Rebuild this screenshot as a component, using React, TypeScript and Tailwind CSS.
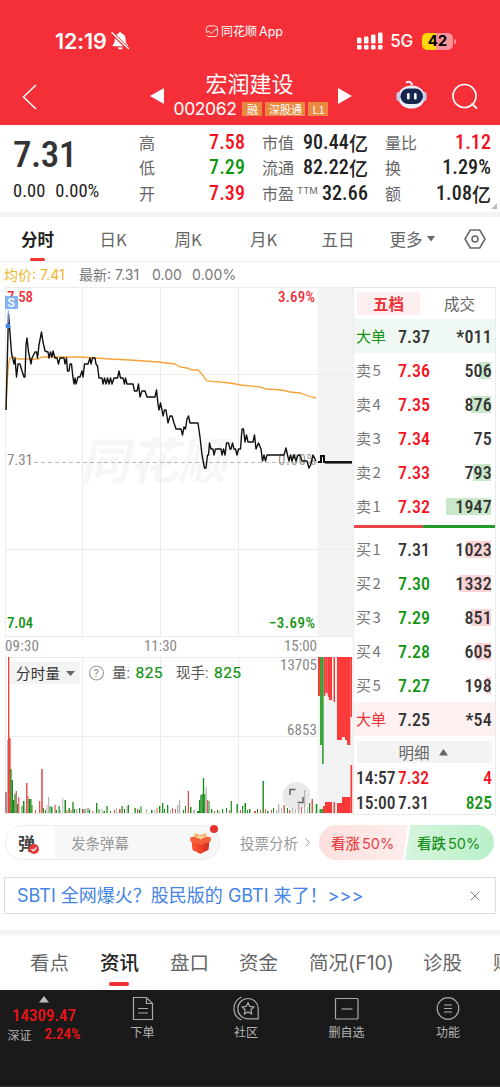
import { ChevronRight, X } from "lucide-react";

type QuoteRow = {
  label: string;
  price: string;
  volume: string;
  bar: string;
};

const sellRows: QuoteRow[] = [
  { label: "卖5", price: "7.36", volume: "506", bar: "w-[12px]" },
  { label: "卖4", price: "7.35", volume: "876", bar: "w-[20px]" },
  { label: "卖3", price: "7.34", volume: "75", bar: "w-0" },
  { label: "卖2", price: "7.33", volume: "793", bar: "w-[18px]" },
  { label: "卖1", price: "7.32", volume: "1947", bar: "w-[45px]" },
];

const buyRows: QuoteRow[] = [
  { label: "买1", price: "7.31", volume: "1023", bar: "w-[25px]" },
  { label: "买2", price: "7.30", volume: "1332", bar: "w-[32px]" },
  { label: "买3", price: "7.29", volume: "851", bar: "w-[20px]" },
  { label: "买4", price: "7.28", volume: "605", bar: "w-[15px]" },
  { label: "买5", price: "7.27", volume: "198", bar: "w-[5px]" },
];

const pricePath =
  "6,410 8.5,314 10,333 11.5,353 14,364 15,358 16.5,377 18,364 20,364 22,371 24,377 25,377 26,345 27,338 28.5,352 31,364 32,358 35,352 36.5,352 37.5,358 39,345 41.5,332 43,342 45,351 48,352 49,358 50.5,352 52,357 53,351 55,358 57,358 58.5,364 60,358 64,358 65,364 66.5,358 67.5,371 69,371 70,364 71.5,364 73,378 74,384 75,378 76,384 78,377 80,377 82,371 83,377 84.5,364 88,364 90,358 91,364 92.5,358 95,358 96,364 97.5,366 99,378 102,378 103,384 104.5,378 106,384 107.5,378 109,384 110.5,378 112,384 114,378 117.5,378 119,371 120.5,378 123,378 124.5,384 125.5,378 127,384 133,384 134.5,391 137,391 138.5,384 140,397 142,391 145,391 147,397 155,397 156.5,390 158,404 159,410 160.5,403 162,410 163,416 164.5,410 166,410 168,423 170,416 172,416 174,423 176,429 181,429 182.5,435 184,427 185.5,429 187,419 188.5,416 190,423 198,423 200,437 202,455 204.5,468 206,468 207.5,455 208.5,455 209.5,443 211,449 213,449 214,455 215.5,449 221,449 222,455 223.5,449 225,455 226.5,443 228.5,443 230,449 231,449 232.5,443 234,449 235.5,449 237,455 238.5,449 240.5,449 242,429 243.5,429 245,442 246.5,435 248,442 253,442 254.5,435 256,449 258.5,443 261,449 262.5,461 264,455 265.5,461 267,455 284,455 286,448 287.5,455 289,461 290.5,455 292,461 294,455 296,461 298,455 300,455 302,461 307,461 309,468 311,464 313,455 315,459 316,461";

const averagePath =
  "6,410 7,385 8.5,365 10,358 14,357 18,359 32,359 38,359 42,357 80,357 110,359 130,360 158,362 175,364 180,367 187,368 192,370 198,370 201,373 207,381 230,383 241,385 260,387 266,389 282,390 290,392 300,393 306,395 312,397 316,398";

const RED = "#e0524f";
const GREEN = "#198c19";
const GRAY = "#b5b5b5";

// x, top, width, color
const volumeBars: [number, number, number, string][] = [
  [5, 792, 2, "#c48080"], [7, 740, 1, GRAY], [8, 657, 1.4, "#e94545"], [9.2, 738, 1.4, "#f03028"],
  [10.3, 769, 1.3, GREEN], [11.5, 780, 1.5, GREEN], [13, 800, 1.2, GREEN], [14.3, 794, 1.2, GREEN],
  [15.6, 791, 1.2, "#a55"], [17, 804, 1.2, GREEN], [18.2, 797, 1.2, RED], [21.5, 806, 1, GREEN],
  [23, 801, 1.5, GREEN], [24.6, 809, 1, GRAY], [26, 783, 1.5, RED], [27.5, 796, 1, RED],
  [28.5, 799, 1.5, GREEN], [30.2, 799, 1.3, GREEN], [31.5, 805, 1, GREEN], [35, 810, 1, RED],
  [39, 801, 1.3, RED], [41.2, 769, 1.6, RED], [43, 808, 1, GREEN], [45, 810, 1, GREEN],
  [46.5, 805, 1, GRAY], [48, 797, 1.2, GRAY], [49.5, 806, 1, GREEN], [51, 807, 1.5, GREEN],
  [54.5, 805, 1.2, RED], [56, 810, 1, GREEN], [58.5, 806, 1.2, GREEN], [60, 810, 1, GRAY],
  [62.3, 798, 1, GRAY], [64.5, 800, 1.5, GREEN], [66.5, 810, 1, RED], [68.5, 808, 1.3, GREEN],
  [70.5, 810, 1, RED], [72.3, 802, 1.3, GREEN], [74, 809, 1, GREEN], [76, 809, 1.5, GRAY],
  [79, 808, 1.2, GREEN], [82, 809, 1.5, "#a33"], [84.5, 809, 1, GREEN], [86.5, 808, 3, GRAY],
  [89, 810, 1.2, GREEN], [92.5, 811, 1, RED], [96, 803, 1.3, GREEN], [98.5, 809, 1, GREEN],
  [101.5, 809, 1, GRAY], [103.5, 811, 1.5, GREEN], [106.3, 806, 1.3, GREEN], [110, 811, 1, GREEN],
  [114, 810, 1, RED], [116, 808, 1, GRAY], [119, 809, 1.6, RED], [121.5, 806, 1.3, GREEN],
  [124, 809, 1, GREEN], [126.5, 806, 1, GRAY], [127.7, 805, 1.3, GREEN], [134.5, 808, 1.3, GREEN],
  [137, 809, 1.3, RED], [139, 810, 1, GREEN], [140.5, 806, 1, GREEN], [146, 809, 1, GRAY],
  [151, 810, 1.5, GREEN], [154, 810, 1, GRAY], [156.5, 808, 1, RED], [159, 806, 1.3, GREEN],
  [162, 803, 1.3, GREEN], [164, 809, 1, GREEN], [167, 805, 1.3, GREEN], [170, 810, 1, GRAY],
  [172, 808, 1, RED], [175, 809, 1, RED], [177, 805, 1.5, GRAY], [179, 800, 1.3, GRAY],
  [183, 810, 1, GREEN], [185, 806, 1, GREEN], [187.7, 791, 1.3, RED], [190, 807, 1.5, GREEN],
  [193, 810, 2, GRAY], [197, 811, 2, GREEN], [199, 800, 1.3, GREEN], [200.3, 795, 1.3, GREEN],
  [201.6, 794, 1.2, GREEN], [202.8, 778, 1.4, GREEN], [204.2, 794, 1.2, GREEN], [205.6, 787, 1.2, GRAY],
  [207, 800, 1.2, RED], [208.5, 801, 1, GREEN], [211, 809, 1.3, GREEN], [214, 811, 1, RED],
  [217, 810, 1.2, GREEN], [219, 811, 1, GRAY], [222, 809, 1.2, GREEN], [226, 808, 1, GREEN],
  [229, 810, 1, RED], [230.7, 801, 1.2, GREEN], [236.5, 804, 1.4, GREEN], [240, 810, 1, RED],
  [242, 806, 1.2, GREEN], [244.5, 803, 1.5, GREEN], [247, 810, 1, GREEN], [249, 809, 1.4, GREEN],
  [254, 811, 2, RED], [257, 809, 1, GREEN], [260, 810, 1, RED], [262.5, 781, 1.4, GREEN],
  [265, 809, 1, RED], [267, 811, 1.5, GREEN], [271, 810, 1, RED], [273, 808, 1, GREEN],
  [276, 810, 1.2, GRAY], [278, 804, 1.4, GRAY], [281, 808, 1, GRAY], [283.5, 805, 1.4, RED],
  [287, 808, 1, GREEN], [289, 810, 1.4, RED], [292, 808, 1.2, GRAY], [295, 809, 1, GRAY],
  [298, 804, 1.4, GRAY], [301, 807, 1, RED], [304, 790, 1.2, GRAY], [307, 807, 1.2, GRAY],
  [309, 803, 1.2, GREEN], [311.5, 799, 1.5, RED], [315.7, 804, 1.6, GREEN],
  [319.5, 809, 3.5, "#37a237"], [323, 806, 2, "#f93838"], [325, 802, 7, "#f93838"],
  [333.5, 802, 1.5, "#f93838"], [337, 803, 5, "#f93838"], [342, 797, 8.5, "#f93838"],
  [350.5, 765, 1.7, "#f93838"],
];

// x, bottom, width, color of the bars hanging from the top in the after-hours strip
const auctionBars: [number, number, number, string][] = [
  [318, 696, 2, "#fb3a3a"], [320, 745, 2.2, "#3aa33a"], [322, 764, 1.7, "#3aa33a"],
  [323.7, 696, 1.6, "#fb3a3a"], [325.3, 693, 2.4, "#fb3a3a"], [327.7, 697, 1.3, "#fb3a3a"],
  [329, 700, 3, "#fb3a3a"], [333.5, 702, 1.5, "#fb3a3a"], [337, 740, 5, "#fb3a3a"],
  [342, 737, 3, "#fb3a3a"], [345, 740, 2, "#fb3a3a"], [347, 745, 3.3, "#fb3a3a"],
  [350.3, 717, 1.7, "#fb3a3a"],
];

const periods = [
  { name: "日K", width: "w-[76px]" },
  { name: "周K", width: "w-[74px]" },
  { name: "月K", width: "w-[77px]" },
  { name: "五日", width: "w-[72px]" },
];

function Header() {
  return (
    <header className="h-[125px] bg-[#f42f38] text-white">
      <div className="flex h-[62px] items-start pl-[55px] pr-[44px]">
        <div className="mt-[30px] flex w-[150px] items-center gap-1">
          <span className="font-[Inter] text-[21.5px] font-semibold leading-[22px] tracking-[-0.1px]">12:19</span>
          <svg width="19" height="20" viewBox="0 0 19 20" fill="white">
            <path d="M9.2 1.2c-.9 0-1.5.6-1.6 1.4C4.700 3.500 3.800 5.700 3.800 8.400c0 3-.8 4.200-2 5.300-.6.600-.3 1.500.6 1.500h13.700c.9 0 1.200-.9.500-1.500-1.200-1.100-2-2.300-2-5.300 0-2.700-1-4.900-3.800-5.800-.1-.8-.7-1.400-1.600-1.400zM6.800 16.500c.3 1.200 1.300 2 2.500 2s2.200-.8 2.500-2z" />
            <path d="M1.500 2.500 17.500 18" stroke="#f42f38" strokeWidth="3.2" />
            <path d="M1 1.800 17.500 17.500" stroke="white" strokeWidth="1.4" strokeLinecap="round" />
          </svg>
        </div>
        <div className="mr-auto mt-[22px] flex items-center gap-[2px] font-[Inter,'Noto_Sans_CJK_SC',sans-serif] text-[12px] leading-[19px]">
          <svg width="14" height="15" viewBox="0 0 15 15" fill="none" stroke="white" strokeWidth="0.9">
            <path d="M1.400 8V4.500a3 3 0 0 1 3-3h6a3 3 0 0 1 3 3V10a3 3 0 0 1-3 3h-6a3 3 0 0 1-2.600-1.600" />
            <path d="m1 8.500 3.500-1L7 9.600l3.500-3.800 2.700-.6" />
          </svg>
          <span className="whitespace-nowrap">同花顺<span className="ml-[2px] text-[12.500px]">App</span></span>
        </div>
        <div className="mt-[31px] flex w-[150px] items-center justify-end">
          <svg width="26" height="18" viewBox="0 0 26 18" fill="white">
            <rect x="0" y="5.500" width="4.500" height="6" rx="1.300" />
            <rect x="7" y="4.500" width="4.500" height="7" rx="1.300" />
            <rect x="14" y="2.500" width="4.500" height="9" rx="1.300" />
            <rect x="21" y="0.500" width="4.500" height="11" rx="1.300" />
            <rect x="0" y="13" width="4.500" height="4.500" rx="1.300" />
            <rect x="7" y="13" width="4.500" height="4.500" rx="1.300" />
            <rect x="14" y="13" width="4.500" height="4.500" rx="1.300" />
            <rect x="21" y="13" width="4.500" height="4.500" rx="1.300" />
          </svg>
          <span className="ml-[7px] font-[Inter] text-[17px] font-medium leading-5 tracking-[-0.200px]">5G</span>
          <span className="ml-[9px] flex h-[17px] w-[31px] items-center justify-center rounded-[5px] bg-linear-to-r from-[#ffd60a] from-45% to-[#fb9297] to-45% font-[Inter] text-[15px] font-bold text-black">42</span>
          <span className="ml-px h-[5px] w-[2px] rounded-r bg-[#fb9297]" />
        </div>
      </div>

      <div className="flex h-[63px] items-center pl-[21px]">
        <svg className="mt-[6px]" width="17" height="26" viewBox="0 0 17 26" fill="none" stroke="white" strokeWidth="1.500">
          <path d="M15 1 2.500 13 15 25" />
        </svg>
        <svg className="ml-[112px] mt-[5px]" width="14" height="16" viewBox="0 0 14 16" fill="white">
          <path d="M14 0v16L0 8z" />
        </svg>
        <div className="ml-[9px] flex w-[156px] flex-col items-center pt-[2px]">
          <div className="pr-[3px] text-[22px] font-normal leading-[29px]">宏润建设</div>
          <div className="flex h-[25px] items-center gap-[3px] whitespace-nowrap">
            <span className="mr-[3px] font-[Inter] text-[17.5px] leading-6 tracking-[-0.400px]">002062</span>
            <span className="flex h-[14px] w-5 items-center justify-center bg-[#e9883f] text-[11px]">融</span>
            <span className="flex h-[14px] w-10 items-center justify-center bg-[#e9883f] text-[11px]">深股通</span>
            <span className="flex h-[14px] w-5 items-center justify-center bg-[#e9883f] text-[11px]">L1</span>
          </div>
        </div>
        <svg className="ml-[9px] mt-[5px]" width="15" height="16" viewBox="0 0 15 16" fill="white">
          <path d="M0 0v16l14-8z" />
        </svg>
        <svg className="ml-[43px] mt-[3px]" width="32" height="30" viewBox="0 0 32 30">
          <path d="M10 2.500c3-1.500 6-.5 6 3" fill="none" stroke="#f4f3fb" strokeWidth="2" />
          <ellipse cx="15.500" cy="17" rx="13.500" ry="11.500" fill="#edf0fc" />
          <rect x="0.500" y="12" width="4" height="9" rx="2" fill="#c6cbe8" />
          <rect x="26.500" y="12" width="4" height="9" rx="2" fill="#c6cbe8" />
          <rect x="4.500" y="8.500" width="22.500" height="15.500" rx="7.750" fill="#17264d" />
          <rect x="11" y="13" width="2.600" height="6.500" rx="1.300" fill="white" />
          <rect x="18" y="13" width="2.600" height="6.500" rx="1.300" fill="white" />
        </svg>
        <svg className="ml-[23px] mt-[6px]" width="28" height="28" viewBox="0 0 28 28" fill="none" stroke="white" strokeWidth="1.700">
          <circle cx="13.500" cy="13" r="11.500" />
          <path d="m21 21 4.500 4" strokeLinecap="round" />
        </svg>
      </div>
    </header>
  );
}

function Amount({ value, unit, color = "text-[#222]" }: { value: string; unit?: string; color?: string }) {
  return (
    <span className={`flex font-medium ${color}`}>
      <span className="font-[Roboto] text-[20px] tracking-[0.100px] font-stretch-[85%]">{value}</span>
      {unit && <span className="text-[19px]">{unit}</span>}
    </span>
  );
}

function Summary() {
  return (
    <section className="flex h-[87px] bg-white pt-[5px] text-[16px] text-[#222]">
      <div className="w-[139px] pl-[13px] font-[Roboto]">
        <div className="mt-[4px] text-[37px] font-medium leading-[41px] tracking-[-0.500px] text-[#333] font-stretch-[85%]">7.31</div>
        <div className="mt-[6px] flex gap-[10px] text-[18.500px] leading-[20px] font-stretch-[85%]">
          <span>0.00</span>
          <span>0.00%</span>
        </div>
      </div>
      <div className="w-[106px] leading-[25.3px]">
        <div className="flex justify-between"><span className="text-[#666]">高</span><Amount value="7.58" color="text-[#f60d20]" /></div>
        <div className="flex justify-between"><span className="text-[#666]">低</span><Amount value="7.29" color="text-[#0f960f]" /></div>
        <div className="flex justify-between"><span className="text-[#666]">开</span><Amount value="7.39" color="text-[#f60d20]" /></div>
      </div>
      <div className="ml-[17px] w-[106px] whitespace-nowrap leading-[25.3px]">
        <div className="flex justify-between"><span className="text-[#666]">市值</span><Amount value="90.44" unit="亿" /></div>
        <div className="flex justify-between"><span className="text-[#666]">流通</span><Amount value="82.22" unit="亿" /></div>
        <div className="flex justify-between">
          <span className="flex text-[#666]">市盈<sup className="top-0 ml-[3px] font-[Inter] text-[9.500px] leading-[19px]">TTM</sup></span>
          <Amount value="32.66" />
        </div>
      </div>
      <div className="ml-[17px] w-[106px] leading-[25.3px]">
        <div className="flex justify-between"><span className="text-[#666]">量比</span><Amount value="1.12" color="text-[#f60d20]" /></div>
        <div className="flex justify-between"><span className="text-[#666]">换</span><Amount value="1.29%" /></div>
        <div className="flex justify-between"><span className="text-[#666]">额</span><Amount value="1.08" unit="亿" /></div>
      </div>
      <svg className="mt-[73px]" width="7" height="7" viewBox="0 0 7 7" fill="#bbb"><path d="M6 0v6H0z" /></svg>
    </section>
  );
}

function PeriodTabs() {
  return (
    <nav className="flex h-[45px] border-b border-[#f0f0f0] bg-white text-[16.5px] leading-[45px] text-[#666]">
      <div className="flex w-[75px] flex-col items-center">
        <span className="h-[41px] font-bold text-[#222]">分时</span>
        <span className="h-[3px] w-[15px] shrink-0 rounded-full bg-[#f2322f]" />
      </div>
      {periods.map((period) => (
        <div key={period.name} className={`${period.width} text-center`}>{period.name}</div>
      ))}
      <div className="flex w-[76px] items-center justify-center gap-1">
        更多
        <svg width="8" height="6" viewBox="0 0 8 6" fill="#666"><path d="M0 0h8L4 5.500z" /></svg>
      </div>
      <svg className="ml-[14px] mt-[11px]" width="22" height="22" viewBox="0 0 22 22" fill="none" stroke="#666" strokeWidth="1.500">
        <path d="M6.300 2h9.400L21 11l-5.300 9H6.300L1 11z" strokeLinejoin="round" />
        <circle cx="11" cy="11" r="3" />
      </svg>
    </nav>
  );
}

function PriceChart() {
  return (
    <svg className="block shrink-0 font-[Roboto,'Noto_Sans_CJK_SC',sans-serif]" width="353" height="528" viewBox="0 287 353 528">
      <text x="80" y="479" fontSize="49" fontWeight="700" fontStyle="italic" fill="#f6f6f6">同花顺</text>
      <rect x="317.500" y="287" width="35.500" height="349" fill="#f3f3f3" />
      <rect x="317.500" y="657" width="35.500" height="156" fill="#f3f3f3" />
      <g stroke="#ebebeb" strokeWidth="1" fill="none">
        <path d="M5 287.500h348M5 374.500h348M5 549.500h348M5 636.500h348M5 657.500h313M5 736.500h313M5 813.500h348" />
        <path d="M5.500 287v349M82.500 287v349M160.500 287v349M238.500 287v349M5.500 657v156M82.500 657v156M160.500 657v156M238.500 657v156" />
      </g>
      <path d="M34 462.500H318" stroke="#c9b9a4" strokeWidth="1" strokeDasharray="4 3" />
      <g className="font-stretch-[85%]" fontSize="15">
        <text x="7" y="302" fill="#ef3038" textLength="26" fontWeight="500">7.58</text>
        <text x="278" y="302" fill="#ef3038" textLength="37" fontWeight="500">3.69%</text>
        <text x="7" y="465" fill="#888" textLength="26">7.31</text>
        <text x="278" y="465" fill="#999" textLength="38">0.00%</text>
        <text x="7" y="628" fill="#129412" textLength="26" fontWeight="500">7.04</text>
        <text x="269" y="628" fill="#129412" textLength="46" fontWeight="500">−3.69%</text>
        <text x="5" y="651" fill="#888" textLength="34">09:30</text>
        <text x="144" y="651" fill="#888" textLength="33">11:30</text>
        <text x="284" y="651" fill="#888" textLength="33">15:00</text>
        <text x="280" y="669.500" fill="#888" textLength="37">13705</text>
        <text x="287" y="735" fill="#888" textLength="30">6853</text>
      </g>
      <polyline points={averagePath} fill="none" stroke="#f5a336" strokeWidth="1.300" />
      <polyline points={pricePath} fill="none" stroke="#111" strokeWidth="1.400" strokeLinejoin="round" />
      <path d="M318 462h3v-6h3v6h2" fill="none" stroke="#111" strokeWidth="2" />
      <path d="M325 462.300h27" stroke="#111" strokeWidth="2.600" />
      <path d="M8.300 310v13" stroke="#6fa8ee" strokeWidth="1" />
      <circle cx="8" cy="326" r="2.500" fill="#4688e8" />
      <rect x="5" y="296" width="13" height="13" fill="#6fa8ee" fillOpacity="0.850" />
      <text x="7.500" y="307" fontSize="12" fill="white" fontWeight="500">S</text>

      {auctionBars.map(([x, bottom, width, color]) => (
        <rect key={x} x={x} y={657} width={width} height={bottom - 657} fill={color} />
      ))}
      <circle cx="296.500" cy="796" r="14" fill="#e9e9e9" />
      {volumeBars.map(([x, top, width, color]) => (
        <rect key={x} x={x} y={top} width={width} height={813 - top} fill={color} />
      ))}
      <path d="M290 795v-5.500h5.500M297.500 802.500h5.500V797" fill="none" stroke="#666" strokeWidth="1.600" />

      <rect x="10.500" y="662" width="69" height="22" fill="#f3f3f3" />
      <text x="16" y="678.500" fontSize="14.500" fill="#333" textLength="44">分时量</text>
      <path d="M66 671h9l-4.500 5z" fill="#666" />
      <circle cx="96.500" cy="673" r="7" fill="none" stroke="#999" strokeWidth="1.100" />
      <text x="93.500" y="677" fontSize="11" fill="#888">?</text>
      <g fontSize="14.500">
        <text x="112" y="678" fill="#555">量:</text>
        <text x="135.500" y="678" fontSize="15.500" fill="#129412" stroke="#129412" strokeWidth="0.200" textLength="27">825</text>
        <text x="176" y="678" fill="#555">现手:</text>
        <text x="214" y="678" fontSize="15.500" fill="#129412" stroke="#129412" strokeWidth="0.200" textLength="27">825</text>
      </g>
    </svg>
  );
}

function OrderRow({ row, side }: { row: QuoteRow; side: "sell" | "buy" }) {
  const priceColor = side === "sell" ? "text-[#f8101c]" : "text-[#0f960f]";
  return (
    <div className="flex h-[34.100px] items-center pl-[2px] pr-[3px]">
      <span className="w-[42px] text-[15px] tracking-[1.500px] text-[#777]">{row.label}</span>
      <span className={`font-[Roboto] text-[18px] font-medium font-stretch-[85%] ${row.price === "7.31" ? "text-[#333]" : priceColor}`}>{row.price}</span>
      <span className="relative ml-auto flex h-[17px] items-center font-[Roboto] text-[18px] font-medium tracking-[0.200px] text-[#333] font-stretch-[85%]">
        <span className={`absolute right-px top-0 h-[17px] ${row.bar} ${side === "sell" ? "bg-[#c9e8ca]" : "bg-[#fbd3d5]"}`} />
        <span className="relative">{row.volume}</span>
      </span>
    </div>
  );
}

function OrderBook() {
  return (
    <div className="w-[143px] border border-[#ececec] border-t-[#e4e4e4] bg-white">
      <div className="flex h-[31px] items-center text-[15.500px]">
        <span className="ml-[3px] flex h-[23px] w-[63px] items-center justify-center bg-[#fdeff0] font-bold text-[#ee3035]">五档</span>
        <span className="ml-[24px] text-[#666]">成交</span>
      </div>
      <div className="flex h-[34px] items-center bg-[#f0f8f4] pl-[2px] pr-[3px]">
        <span className="w-[42px] text-[15px] text-[#129412]">大单</span>
        <span className="font-[Roboto] text-[18px] font-medium text-[#333] font-stretch-[85%]">7.37</span>
        <span className="ml-auto font-[Roboto] text-[18px] font-medium tracking-[0.200px] text-[#333] font-stretch-[85%]">*011</span>
      </div>
      {sellRows.map((row) => <OrderRow key={row.label} row={row} side="sell" />)}
      <div className="mb-[4px] mt-[2px] flex h-[2.500px]">
        <span className="w-[69px] bg-[#ea4448]" />
        <span className="flex-1 bg-[#239b2b]" />
      </div>
      {buyRows.map((row) => <OrderRow key={row.label} row={row} side="buy" />)}
      <div className="flex h-[34px] items-center bg-[#fdf1f2] pl-[2px] pr-[3px]">
        <span className="w-[42px] text-[15px] text-[#ee3035]">大单</span>
        <span className="font-[Roboto] text-[18px] font-medium text-[#333] font-stretch-[85%]">7.25</span>
        <span className="ml-auto font-[Roboto] text-[18px] font-medium tracking-[0.200px] text-[#333] font-stretch-[85%]">*54</span>
      </div>
      <div className="mx-[3px] mt-[5px] flex h-[22px] items-center justify-center gap-[9px] bg-[#f3f3f3] pr-[3px] text-[15.500px] text-[#666]">
        明细
        <svg width="9" height="7" viewBox="0 0 9 7" fill="#666"><path d="M0 6.500h9L4.500 0z" /></svg>
      </div>
      <div className="mt-[3px] pl-[2px] pr-[3px] font-[Roboto] text-[17.500px] font-medium leading-[25px] text-[#333] font-stretch-[85%]">
        <div className="flex"><span className="w-[42px] whitespace-nowrap">14:57</span><span className="text-[#f8101c]">7.32</span><span className="ml-auto text-[#f8101c]">4</span></div>
        <div className="flex"><span className="w-[42px] whitespace-nowrap">15:00</span><span>7.31</span><span className="ml-auto text-[#129412]">825</span></div>
      </div>
    </div>
  );
}

function CommentBar() {
  return (
    <section className="flex h-[62px] items-start bg-white pl-[5px] pt-[10px]">
      <div className="relative flex h-[35px] w-[215px] items-center overflow-visible rounded-full border border-[#ececec] bg-[#f7f7f7] text-[14.500px] text-[#999]">
        <div className="flex h-full w-[49px] items-center rounded-l-full bg-white pl-[12px]">
          <span className="text-[17px] font-bold text-[#444]">弹</span>
          <svg className="-ml-[6px] mt-[12px] shrink-0" width="10" height="10" viewBox="0 0 10 10">
            <circle cx="5" cy="5" r="5" fill="#e4393c" />
            <path d="m2.500 5 2 1.800 3-3.300" fill="none" stroke="white" strokeWidth="1.200" />
          </svg>
        </div>
        <span className="ml-[16px]">发条弹幕</span>
        <svg className="ml-[61px]" width="21" height="22" viewBox="0 0 21 22">
          <path d="M1.500 8.500 10.500 12v9.500l-8-3.500z" fill="#f4512e" />
          <path d="M19.500 8.500 10.500 12v9.500l8-3.500z" fill="#d93522" />
          <path d="M0 5.500 10 3l11 2.500-.5 4-10 3.500L.500 9.500z" fill="#f4603a" />
          <path d="M7.500 11.500 10.500 13l3-1.500v9l-3 1.300-3-1.300z" fill="#ee4128" />
          <path d="M10.500 6C8 5.500 4 4.500 4.500 2.500 5 .5 9 1.500 10.500 6c1.500-4.500 5.500-5.500 6-3.500.5 2-3.500 3-6 3.500z" fill="#f58a4a" stroke="#fbdc9a" strokeWidth="1.400" />
        </svg>
        <span className="absolute right-[1px] top-[-1px] h-[8px] w-[8px] rounded-full bg-[#e4302f]" />
      </div>
      <div className="ml-[20px] flex h-[35px] items-center gap-[2px] text-[14.500px] text-[#999]">
        投票分析
        <ChevronRight size={15} strokeWidth={1.500} />
      </div>
      <div className="ml-[4px] flex h-[35px] text-[14.500px] font-medium leading-[35px]">
        <div className="w-[89px] rounded-l-full bg-linear-to-r from-[#fddfdd] to-[#fdeeed] pl-[12px] text-[#e84248] [clip-path:polygon(0_0,100%_0,94%_100%,0_100%)]">看涨<span className="ml-[2px] font-[Inter] font-normal">50%</span></div>
        <div className="-ml-[3px] w-[89px] rounded-r-full bg-linear-to-r from-[#d6f5de] to-[#b9f0c8] pl-[12px] text-[#17901d] [clip-path:polygon(6%_0,100%_0,100%_100%,0_100%)]">看跌<span className="ml-[2px] font-[Inter] font-normal">50%</span></div>
      </div>
    </section>
  );
}

function InfoTabs() {
  return (
    <nav className="flex h-[55px] shrink-0 overflow-hidden whitespace-nowrap bg-white pl-[30px] text-[19.500px] leading-[54px] text-[#666]">
      <span className="w-[70px] shrink-0">看点</span>
      <span className="flex w-[70px] shrink-0 flex-col">
        <span className="h-[47px] font-medium text-[#222]">资讯</span>
        <span className="ml-[9px] h-[4px] w-[20px] rounded-full bg-[#ee3035]" />
      </span>
      <span className="w-[69px] shrink-0">盘口</span>
      <span className="w-[70px] shrink-0">资金</span>
      <span className="w-[114px] shrink-0">简况<span className="font-[Inter]">(F10)</span></span>
      <span className="w-[70px] shrink-0">诊股</span>
      <span className="shrink-0">财务</span>
    </nav>
  );
}

function BottomBar() {
  return (
    <footer className="flex h-[97px] shrink-0 border-b border-[#333] bg-[#1a1a1a] text-[12px] text-[#b5b5b5]">
      <div className="flex w-[88px] flex-col items-center pt-[6px]">
        <svg width="10" height="7" viewBox="0 0 10 7" fill="#bbb"><path d="M0 6.500h10L5 0z" /></svg>
        <span className="mt-[1px] font-[Roboto] text-[17px] font-medium leading-[22px] text-[#ef1218] font-stretch-[85%]">14309.47</span>
        <span className="flex items-center gap-[13px] whitespace-nowrap leading-[17px]">
          <span className="text-[12px]">深证</span>
          <span className="font-[Roboto] text-[15px] font-medium text-[#ef1218] font-stretch-[85%]">2.24%</span>
        </span>
      </div>
      <div className="flex w-[109px] flex-col items-center gap-[2px] pt-[6px]">
        <svg width="24" height="25" viewBox="0 0 24 25" fill="none" stroke="#aaa" strokeWidth="1.200">
          <path d="M2.500 1.500h13l6 6V23.500h-19zM15.500 1.500v6h6M7 12.500h10M7 17h10" />
        </svg>
        <span>下单</span>
      </div>
      <div className="flex w-[98px] flex-col items-center gap-[2px] pt-[6px]">
        <svg width="26" height="25" viewBox="0 0 26 25" fill="none" stroke="#aaa" strokeWidth="1.200">
          <path d="M15 2.500a10.200 10.200 0 1 0 0 20.400h10.200V12.500A10.200 10.200 0 0 0 15 2.500z" />
          <path d="M8.500 1C3.500 3.500 1 7.500 1 12.500s2.500 9.500 7.500 11.500" />
          <path d="m15 6.800 1.800 3.600 4 .6-2.900 2.800.7 4-3.600-1.900-3.600 1.900.7-4L9.200 11l4-.6z" />
        </svg>
        <span>社区</span>
      </div>
      <div className="flex w-[103px] flex-col items-center gap-[2px] pt-[6px]">
        <svg width="25" height="25" viewBox="0 0 25 25" fill="none" stroke="#aaa" strokeWidth="1.200">
          <rect x="1.500" y="2.500" width="22.500" height="20.500" rx="1" />
          <path d="M7.500 13h11" />
        </svg>
        <span>删自选</span>
      </div>
      <div className="flex w-[100px] flex-col items-center gap-[2px] pt-[6px]">
        <svg width="24" height="25" viewBox="0 0 24 25" fill="none" stroke="#aaa" strokeWidth="1.200">
          <circle cx="12" cy="12.500" r="10.800" />
          <path d="M8 9h8M8 12.500h8M8 16h8" />
        </svg>
        <span>功能</span>
      </div>
    </footer>
  );
}

export default function App() {
  return (
    <div className="flex h-[1087px] w-[500px] flex-col overflow-hidden bg-white font-['Noto_Sans_CJK_SC',sans-serif]">
      <Header />
      <Summary />
      <div className="h-[5px] shrink-0 bg-[#f4f4f4]" />
      <PeriodTabs />
      <div className="flex h-[25px] items-center whitespace-nowrap pl-[4px] font-[Inter,'Noto_Sans_CJK_SC',sans-serif] text-[14px] text-[#777]">
        <span className="w-[75px] text-[#efb52d]">均价: 7.41</span>
        <span className="w-[73px]">最新: 7.31</span>
        <span className="w-[40px]">0.00</span>
        <span className="tracking-[0.200px]">0.00%</span>
      </div>
      <main className="flex h-[528px]">
        <PriceChart />
        <OrderBook />
      </main>
      <CommentBar />
      <div className="mx-[4px] flex h-[37px] shrink-0 items-center justify-between border border-[#dedede] px-[12px] text-[18px] text-[#4484e4]">
        <span className="whitespace-nowrap font-[Inter,'Noto_Sans_CJK_SC',sans-serif]">SBTI 全网爆火？股民版的 GBTI 来了！&gt;&gt;&gt;</span>
        <X size={16} strokeWidth={1.500} color="#888" />
      </div>
      <div className="mt-[16px] h-[5px] shrink-0 bg-[#f4f4f4]" />
      <InfoTabs />
      <BottomBar />
    </div>
  );
}
